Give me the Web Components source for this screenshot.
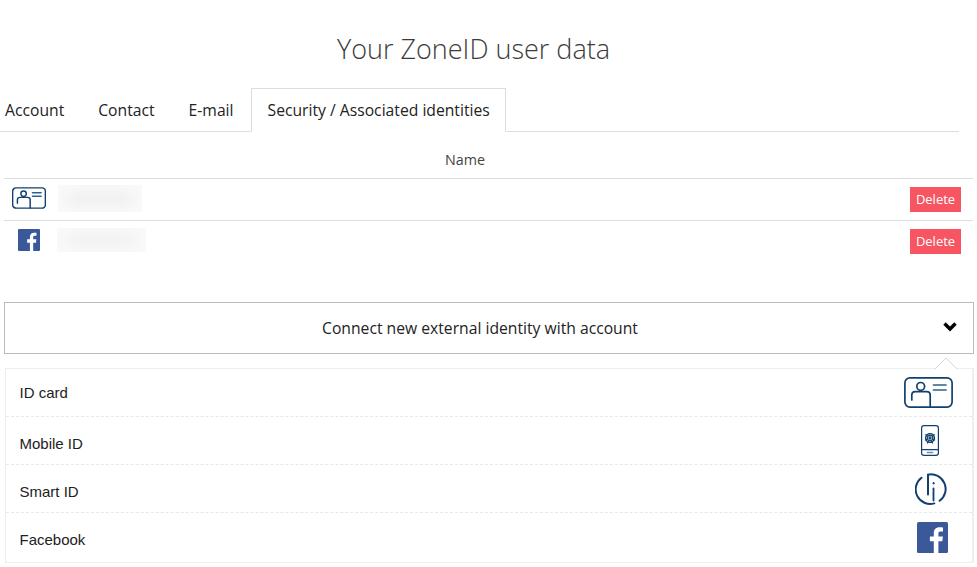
<!DOCTYPE html>
<html lang="en">
<head>
<meta charset="utf-8">
<title>Your ZoneID user data</title>
<style>
  html, body { margin: 0; background: #fff; }
  body { font-family: "Open Sans", sans-serif; color: #222; }
</style>
</head>
<body>
<template id="icon-card">
  <svg viewBox="0 0 49 31" fill="none" stroke="#12406f" style="stroke-width:var(--sw,1.7)" stroke-linecap="round" stroke-linejoin="round">
    <rect x="0.9" y="0.9" width="47.2" height="29.2" rx="5"/>
    <circle cx="16.7" cy="9.4" r="3.9"/>
    <path d="M7.8 23v-5.2a3.4 3.4 0 0 1 3.4-3.2h11.6a3.4 3.4 0 0 1 3.4 3.2v12"/>
    <path d="M29.5 8h12.5M29.5 13h12.5" stroke="#2f5f8c"/>
  </svg>
</template>
<template id="icon-facebook">
  <svg viewBox="0 0 31 31">
    <rect width="31" height="31" rx="1.5" fill="#3b5998"/>
    <path fill="#fff" d="M21.4 31V19.2h3.9l.6-4.6h-4.5v-2.9c0-1.3.4-2.2 2.3-2.2H26V5.4c-.4-.1-1.8-.2-3.4-.2-3.4 0-5.8 2.1-5.8 5.900v3.500h-3.900v4.600h3.900V31z"/>
  </svg>
</template>
<template id="icon-mobile">
  <svg viewBox="0 0 18 31" fill="none" stroke="#12406f" stroke-linecap="round">
    <rect x="0.6" y="0.6" width="16.8" height="29.8" rx="2.4" stroke-width="1.200"/>
    <path d="M0.8 24.600h16.400" stroke-width="1.100"/>
    <path d="M6.400 27.500h5.200" stroke="#6e8cab" stroke-width="1.500"/>
    <g stroke-width="1.300">
      <circle cx="9" cy="13" r="4.400" stroke-dasharray="2 0.5"/>
      <circle cx="9" cy="13" r="2.800" stroke-dasharray="1.800 0.300"/>
      <circle cx="9" cy="13" r="1"/>
      <path d="M4.800 9.800l1.400 1M13.200 9.800l-1.400 1M4.400 15l1-.4M13.600 15l-1-.4M6.500 18l.8-1.300M11.500 18l-.8-1.300"/>
    </g>
  </svg>
</template>
<template id="icon-smart">
  <svg viewBox="0 0 32 32" fill="none" stroke="#12406f" stroke-width="2" stroke-linecap="round">
    <path d="M6.500 4.700A14.600 14.600 0 0 0 19.300 30.400"/>
    <path d="M13 1.700A14.600 14.600 0 0 1 24.600 27.800"/>
    <path d="M13 1.800V21.500"/>
    <path d="M18.500 15.500V27.500" stroke-width="1.800"/>
    <circle cx="18.500" cy="10.200" r="0.700" fill="#12406f" stroke-width="0.900"/>
  </svg>
</template>

<template id="tpl-page-title">
  <style>
    :host { display: block; text-align: center; padding: 29px 30px 19px 0; }
    h1 { margin: 0; font: 300 27px/40px "Open Sans", sans-serif; color: #3b3b3b; }
  </style>
  <h1><slot></slot></h1>
</template>

<template id="tpl-tab-bar">
  <style>
    :host { display: flex; width: 959px; height: 44px; border-bottom: 1px solid #ddd; box-sizing: border-box; }
  </style>
  <slot></slot>
</template>

<template id="tpl-tab-item">
  <style>
    :host { display: block; box-sizing: border-box; height: 44px; padding: 0 17px; font: 15.700px/45px "Open Sans", sans-serif; color: #222; white-space: nowrap; }
    :host([first]) { padding-left: 5px; }
    :host([active]) { background: #fff; border: 1px solid #ddd; border-bottom-color: #fff; padding: 0 15px 0 16px; }
    :host([active]) span { margin-top: -1px; }
    span { display: block; }
  </style>
  <span><slot></slot></span>
</template>

<template id="tpl-identity-table">
  <style>
    :host { display: block; margin-left: 4px; width: 969px; }
    header { height: 46px; padding-right: 47px; text-align: center; font: 14.300px/56px "Open Sans", sans-serif; color: #444; }
  </style>
  <header>Name</header>
  <slot></slot>
</template>

<template id="tpl-identity-row">
  <style>
    :host { display: flex; align-items: center; box-sizing: border-box; height: 42px; border-top: 1px solid #ddd; padding: 0 12px 0 0; }
    .icon { width: 50px; flex: none; display: flex; justify-content: center; margin-top: -4px; }
    .blur { flex: none; background: #fafafa; position: relative; overflow: hidden; }
    .blur::after { content: ""; position: absolute; inset: 7px 9px; background: #eee; filter: blur(7px); }
    button { margin-left: auto; margin-top: -1px; width: 51px; height: 25px; padding: 0; border: 0; background: #f75561; color: #fff; font: 13px/25px "Open Sans", sans-serif; }
  </style>
  <div class="icon"><slot name="icon"></slot></div>
  <div class="blur"></div>
  <button>Delete</button>
</template>

<template id="tpl-connect-panel">
  <style>
    :host { display: block; position: relative; margin: 40px 3px 0 4px; }
    .head { display: flex; align-items: center; justify-content: center; box-sizing: border-box; height: 52px; border: 1px solid #bbb; font: 15.700px "Open Sans", sans-serif; color: #222; position: relative; padding-right: 18px; }
    .chev { position: absolute; right: 16px; top: 18px; }
    .list { box-sizing: border-box; margin: 14px 0 0 1px; width: 969px; border: 1px solid #eee; border-right-width: 2px; }
    .caret { position: absolute; left: 931px; top: 55px; overflow: visible; }
  </style>
  <div class="head">
    <slot name="title"></slot>
    <svg class="chev" width="14" height="12" viewBox="0 0 14 12" fill="none" stroke="#000" stroke-width="3.400"><path d="M1.500 2.500L7 8l5.500-5.500"/></svg>
  </div>
  <div class="list"><slot></slot></div>
  <svg class="caret" width="22" height="12" viewBox="0 0 22 12"><path d="M0 12L11 1l11 11" fill="#fff" stroke="#d4d4d4"/></svg>
</template>

<template id="tpl-provider-row">
  <style>
    :host { display: flex; align-items: center; box-sizing: border-box; height: 48px; padding: 0 15px 0 13.500px; border-top: 1px dashed #e8e8e8; font: 15px "Liberation Sans", Arial, sans-serif; color: #222; }
    :host([first]) { border-top: 0; height: 47px; }
    :host([last]) { height: 50px; }
    span { padding-top: 5px; }
    :host([first]) span { padding-top: 0; margin-top: -1px; }
    :host([last]) span { padding-top: 3px; }
    .icon { margin-left: auto; width: 60px; display: flex; justify-content: center; }
  </style>
  <span><slot></slot></span>
  <div class="icon"><slot name="icon"></slot></div>
</template>

<page-title>Your ZoneID user data</page-title>
<tab-bar>
  <tab-item first>Account</tab-item>
  <tab-item>Contact</tab-item>
  <tab-item>E-mail</tab-item>
  <tab-item active>Security / Associated identities</tab-item>
</tab-bar>
<identity-table>
  <identity-row blur-left="8" blur-width="84" blur-height="27" blur-shift="-2"><zone-icon slot="icon" name="card" width="34" height="22" style="--sw:2.1"></zone-icon></identity-row>
  <identity-row blur-left="7" blur-width="89" blur-height="24" blur-shift="-3"><zone-icon slot="icon" name="facebook" width="22" height="22"></zone-icon></identity-row>
</identity-table>
<connect-panel>
  <span slot="title">Connect new external identity with account</span>
  <provider-row first>ID card<zone-icon slot="icon" name="card" width="49" height="31" shift="1"></zone-icon></provider-row>
  <provider-row>Mobile ID<zone-icon slot="icon" name="mobile" width="18" height="31" shift="3"></zone-icon></provider-row>
  <provider-row>Smart ID<zone-icon slot="icon" name="smart" width="32" height="32" shift="3.500"></zone-icon></provider-row>
  <provider-row last>Facebook<zone-icon slot="icon" name="facebook" width="31" height="31" shift="5"></zone-icon></provider-row>
</connect-panel>

<script>
  class TemplateElement extends HTMLElement {
    constructor() {
      super();
      this.attachShadow({ mode: "open" });
      const tpl = document.getElementById(this.constructor.templateId);
      this.shadowRoot.appendChild(tpl.content.cloneNode(true));
    }
  }

  class ZoneIcon extends HTMLElement {
    constructor() {
      super();
      this.attachShadow({ mode: "open" });
    }
    connectedCallback() {
      const w = this.getAttribute("width");
      const h = this.getAttribute("height");
      // shift moves the icon off the centre of its column
      const shift = (this.getAttribute("shift") || 0) * 2;
      this.shadowRoot.innerHTML = `<style>:host{display:block;width:${w}px;height:${h}px;margin-left:${shift}px}svg{display:block;width:100%;height:100%}</style>`;
      const tpl = document.getElementById("icon-" + this.getAttribute("name"));
      this.shadowRoot.appendChild(tpl.content.cloneNode(true));
    }
  }

  class IdentityRow extends TemplateElement {
    static templateId = "tpl-identity-row";
    connectedCallback() {
      const blur = this.shadowRoot.querySelector(".blur");
      blur.style.marginLeft = this.getAttribute("blur-left") - 4 + "px";
      blur.style.width = this.getAttribute("blur-width") + "px";
      blur.style.height = this.getAttribute("blur-height") + "px";
      blur.style.marginTop = this.getAttribute("blur-shift") + "px";
    }
  }

  const simple = {
    "page-title": "tpl-page-title",
    "tab-bar": "tpl-tab-bar",
    "tab-item": "tpl-tab-item",
    "identity-table": "tpl-identity-table",
    "connect-panel": "tpl-connect-panel",
    "provider-row": "tpl-provider-row",
  };
  for (const [name, id] of Object.entries(simple)) {
    customElements.define(name, class extends TemplateElement {
      static templateId = id;
    });
  }
  customElements.define("identity-row", IdentityRow);
  customElements.define("zone-icon", ZoneIcon);
</script>
</body>
</html>
